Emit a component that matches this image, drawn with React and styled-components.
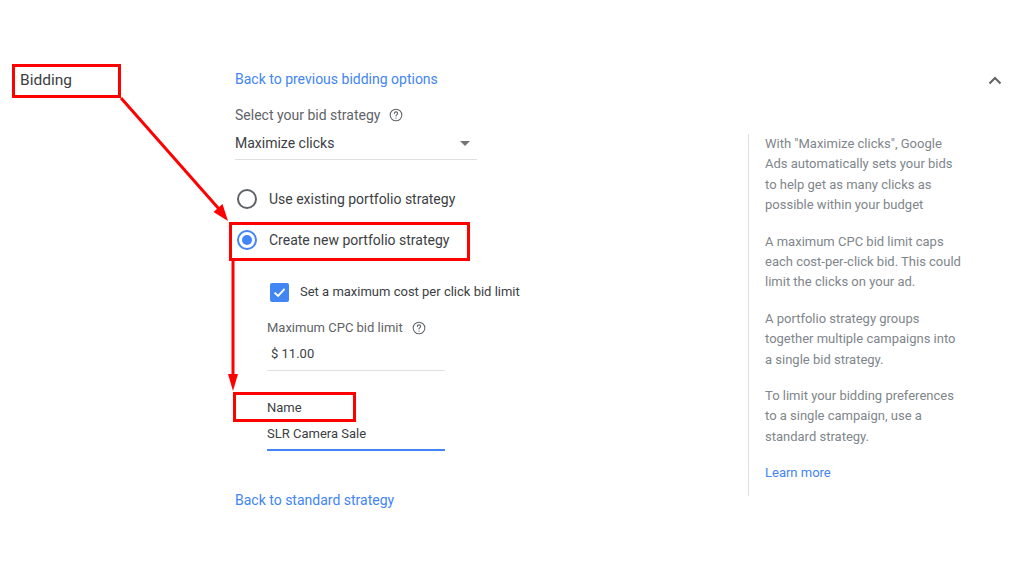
import React from "react";
import styled, { createGlobalStyle } from "styled-components";

const COLORS = {
  blue: "#4285f4",
  text: "#3c4043",
  label: "#5f6368",
  help: "#80868b",
  line: "#e0e0e0",
  red: "#ff0000",
};

const GlobalStyle = createGlobalStyle`
  * { box-sizing: border-box; }
  body {
    margin: 0;
    background: #ffffff;
    font-family: Roboto, "Liberation Sans", Arial, sans-serif;
    color: ${COLORS.text};
  }
`;

const HelpIcon = () => (
  <svg width="14" height="14" viewBox="0 0 24 24" fill="none">
    <circle cx="12" cy="12" r="10" stroke={COLORS.label} strokeWidth="1.8" />
    <path
      d="M9.2 9.4a2.8 2.8 0 0 1 5.6 0c0 1.9-2.8 2.2-2.8 4.3"
      stroke={COLORS.label}
      strokeWidth="1.8"
      strokeLinecap="round"
    />
    <circle cx="12" cy="17.2" r="1.1" fill={COLORS.label} />
  </svg>
);

const App = () => {
  return (
    <>
      <GlobalStyle />
      <Page>
        <Row>
          <LabelColumn>
            <SectionLabel>Bidding</SectionLabel>
          </LabelColumn>

          <Form>
            <Link>Back to previous bidding options</Link>

            <FieldLabel>
              Select your bid strategy
              <HelpIcon />
            </FieldLabel>
            <Select>
              <span>Maximize clicks</span>
              <Caret />
            </Select>

            <RadioGroup>
              <RadioRow>
                <Radio />
                <RadioText>Use existing portfolio strategy</RadioText>
              </RadioRow>
              <RadioRow>
                <Radio checked />
                <RadioText>Create new portfolio strategy</RadioText>
              </RadioRow>
            </RadioGroup>

            <Nested>
              <CheckRow>
                <Checkbox>
                  <svg width="13" height="11" viewBox="0 0 13 11">
                    <path
                      d="M1.5 5.6l3.6 3.4L11.6 1.8"
                      stroke="#fff"
                      strokeWidth="1.9"
                      fill="none"
                    />
                  </svg>
                </Checkbox>
                <CheckText>Set a maximum cost per click bid limit</CheckText>
              </CheckRow>

              <SubLabel $gap={16}>
                Maximum CPC bid limit
                <HelpIcon />
              </SubLabel>
              <Input>$ 11.00</Input>

              <SubLabel $gap={27} $dark>
                Name
              </SubLabel>
              <Input $focused>SLR Camera Sale</Input>
            </Nested>

            <Link $top={39}>Back to standard strategy</Link>
          </Form>

          <Help>
            <HelpText>
              With "Maximize clicks", Google Ads automatically sets your bids
              to help get as many clicks as possible within your budget
            </HelpText>
            <HelpText>
              A maximum CPC bid limit caps each cost-per-click bid. This could
              limit the clicks on your ad.
            </HelpText>
            <HelpText>
              A portfolio strategy groups together multiple campaigns into a
              single bid strategy.
            </HelpText>
            <HelpText>
              To limit your bidding preferences to a single campaign, use a
              standard strategy.
            </HelpText>
            <HelpLink>Learn more</HelpLink>
          </Help>

          <Collapse>
            <svg width="14" height="9" viewBox="0 0 14 9">
              <path
                d="M1.5 7.5L7 2l5.5 5.5"
                stroke={COLORS.label}
                strokeWidth="2"
                fill="none"
              />
            </svg>
          </Collapse>
        </Row>

        {/* red annotations drawn over the form */}
        <Annotations viewBox="0 0 1024 576">
          <rect x="230.5" y="223.5" width="238" height="36" />
          <rect x="234.5" y="393.5" width="120" height="27" />
          <line x1="121" y1="98" x2="219" y2="209" />
          <polygon points="228,221 213.5,212 222.5,204" />
          <line x1="233" y1="261" x2="233" y2="376" />
          <polygon points="233,391 228,374 238,374" />
        </Annotations>
      </Page>
    </>
  );
};

const Page = styled.div`
  position: relative;
  width: 1024px;
  height: 576px;
  overflow: hidden;
`;

const Row = styled.div`
  display: flex;
  align-items: flex-start;
  padding-top: 64px;
`;

const LabelColumn = styled.div`
  width: 235px;
  flex-shrink: 0;
  padding-left: 12px;
`;

const SectionLabel = styled.div`
  width: 109px;
  height: 34px;
  border: 3px solid ${COLORS.red};
  padding-left: 5px;
  font-size: 15.5px;
  line-height: 27px;
  color: ${COLORS.text};
`;

const Form = styled.div`
  width: 513px;
  flex-shrink: 0;
  padding-top: 5px;
  display: flex;
  flex-direction: column;
  align-items: flex-start;
`;

const Link = styled.a`
  margin-top: ${(p) => p.$top || 0}px;
  font-size: 14px;
  line-height: 20px;
  color: ${COLORS.blue};
  cursor: pointer;
`;

const FieldLabel = styled.div`
  margin-top: 16px;
  display: flex;
  align-items: center;
  gap: 9px;
  font-size: 14px;
  line-height: 20px;
  color: ${COLORS.label};
`;

const Select = styled.div`
  margin-top: 8px;
  width: 242px;
  display: flex;
  align-items: center;
  justify-content: space-between;
  padding: 0 7px 6px 0;
  border-bottom: 1px solid ${COLORS.line};
  font-size: 14px;
  line-height: 20px;
  color: ${COLORS.text};
`;

const Caret = styled.span`
  width: 0;
  height: 0;
  border-left: 5px solid transparent;
  border-right: 5px solid transparent;
  border-top: 5px solid #757575;
`;

const RadioGroup = styled.div`
  margin-top: 18px;
  display: flex;
  flex-direction: column;
`;

const RadioRow = styled.label`
  height: 41px;
  display: flex;
  align-items: center;
  padding-left: 2px;
  gap: 12px;
`;

const Radio = styled.span`
  width: 20px;
  height: 20px;
  border-radius: 50%;
  border: 2px solid ${(p) => (p.checked ? COLORS.blue : COLORS.label)};
  display: flex;
  align-items: center;
  justify-content: center;

  &::after {
    content: "";
    width: 10px;
    height: 10px;
    border-radius: 50%;
    background: ${(p) => (p.checked ? COLORS.blue : "transparent")};
  }
`;

const RadioText = styled.span`
  font-size: 14px;
  line-height: 20px;
  color: ${COLORS.text};
`;

const Nested = styled.div`
  padding-left: 32px;
  display: flex;
  flex-direction: column;
  align-items: flex-start;
`;

const CheckRow = styled.label`
  margin-top: 22px;
  height: 20px;
  display: flex;
  align-items: center;
  padding-left: 3px;
  gap: 11px;
`;

const Checkbox = styled.span`
  width: 19px;
  height: 19px;
  border-radius: 2px;
  background: ${COLORS.blue};
  display: flex;
  align-items: center;
  justify-content: center;
`;

const CheckText = styled.span`
  font-size: 13px;
  line-height: 20px;
  color: ${COLORS.text};
`;

const SubLabel = styled.div`
  margin-top: ${(p) => p.$gap}px;
  display: flex;
  align-items: center;
  gap: 9px;
  font-size: 13px;
  line-height: 20px;
  color: ${(p) => (p.$dark ? COLORS.text : COLORS.label)};
`;

const Input = styled.div`
  margin-top: 6px;
  width: 178px;
  padding: 0 0 ${(p) => (p.$focused ? 5 : 6)}px
    ${(p) => (p.$focused ? 0 : 4)}px;
  border-bottom: ${(p) =>
    p.$focused ? `2px solid ${COLORS.blue}` : `1px solid ${COLORS.line}`};
  font-size: 13px;
  line-height: 20px;
  color: ${COLORS.text};
`;

const Help = styled.div`
  margin-top: 70px;
  width: 222px;
  height: 362px;
  flex-shrink: 0;
  border-left: 1px solid ${COLORS.line};
  padding-left: 16px;
`;

const HelpText = styled.p`
  margin: 0 0 16px;
  width: 199px;
  font-size: 13px;
  line-height: 20.4px;
  color: ${COLORS.help};
`;

const HelpLink = styled.a`
  display: block;
  font-size: 13px;
  line-height: 20.4px;
  color: ${COLORS.blue};
  cursor: pointer;
`;

const Collapse = styled.div`
  margin-left: auto;
  margin-right: 17px;
  margin-top: 4px;
  width: 24px;
  height: 24px;
  display: flex;
  align-items: center;
  justify-content: center;
`;

const Annotations = styled.svg`
  position: absolute;
  inset: 0;
  width: 1024px;
  height: 576px;
  pointer-events: none;

  rect,
  line {
    fill: none;
    stroke: ${COLORS.red};
    stroke-width: 3;
  }

  polygon {
    fill: ${COLORS.red};
  }
`;

export default App;
